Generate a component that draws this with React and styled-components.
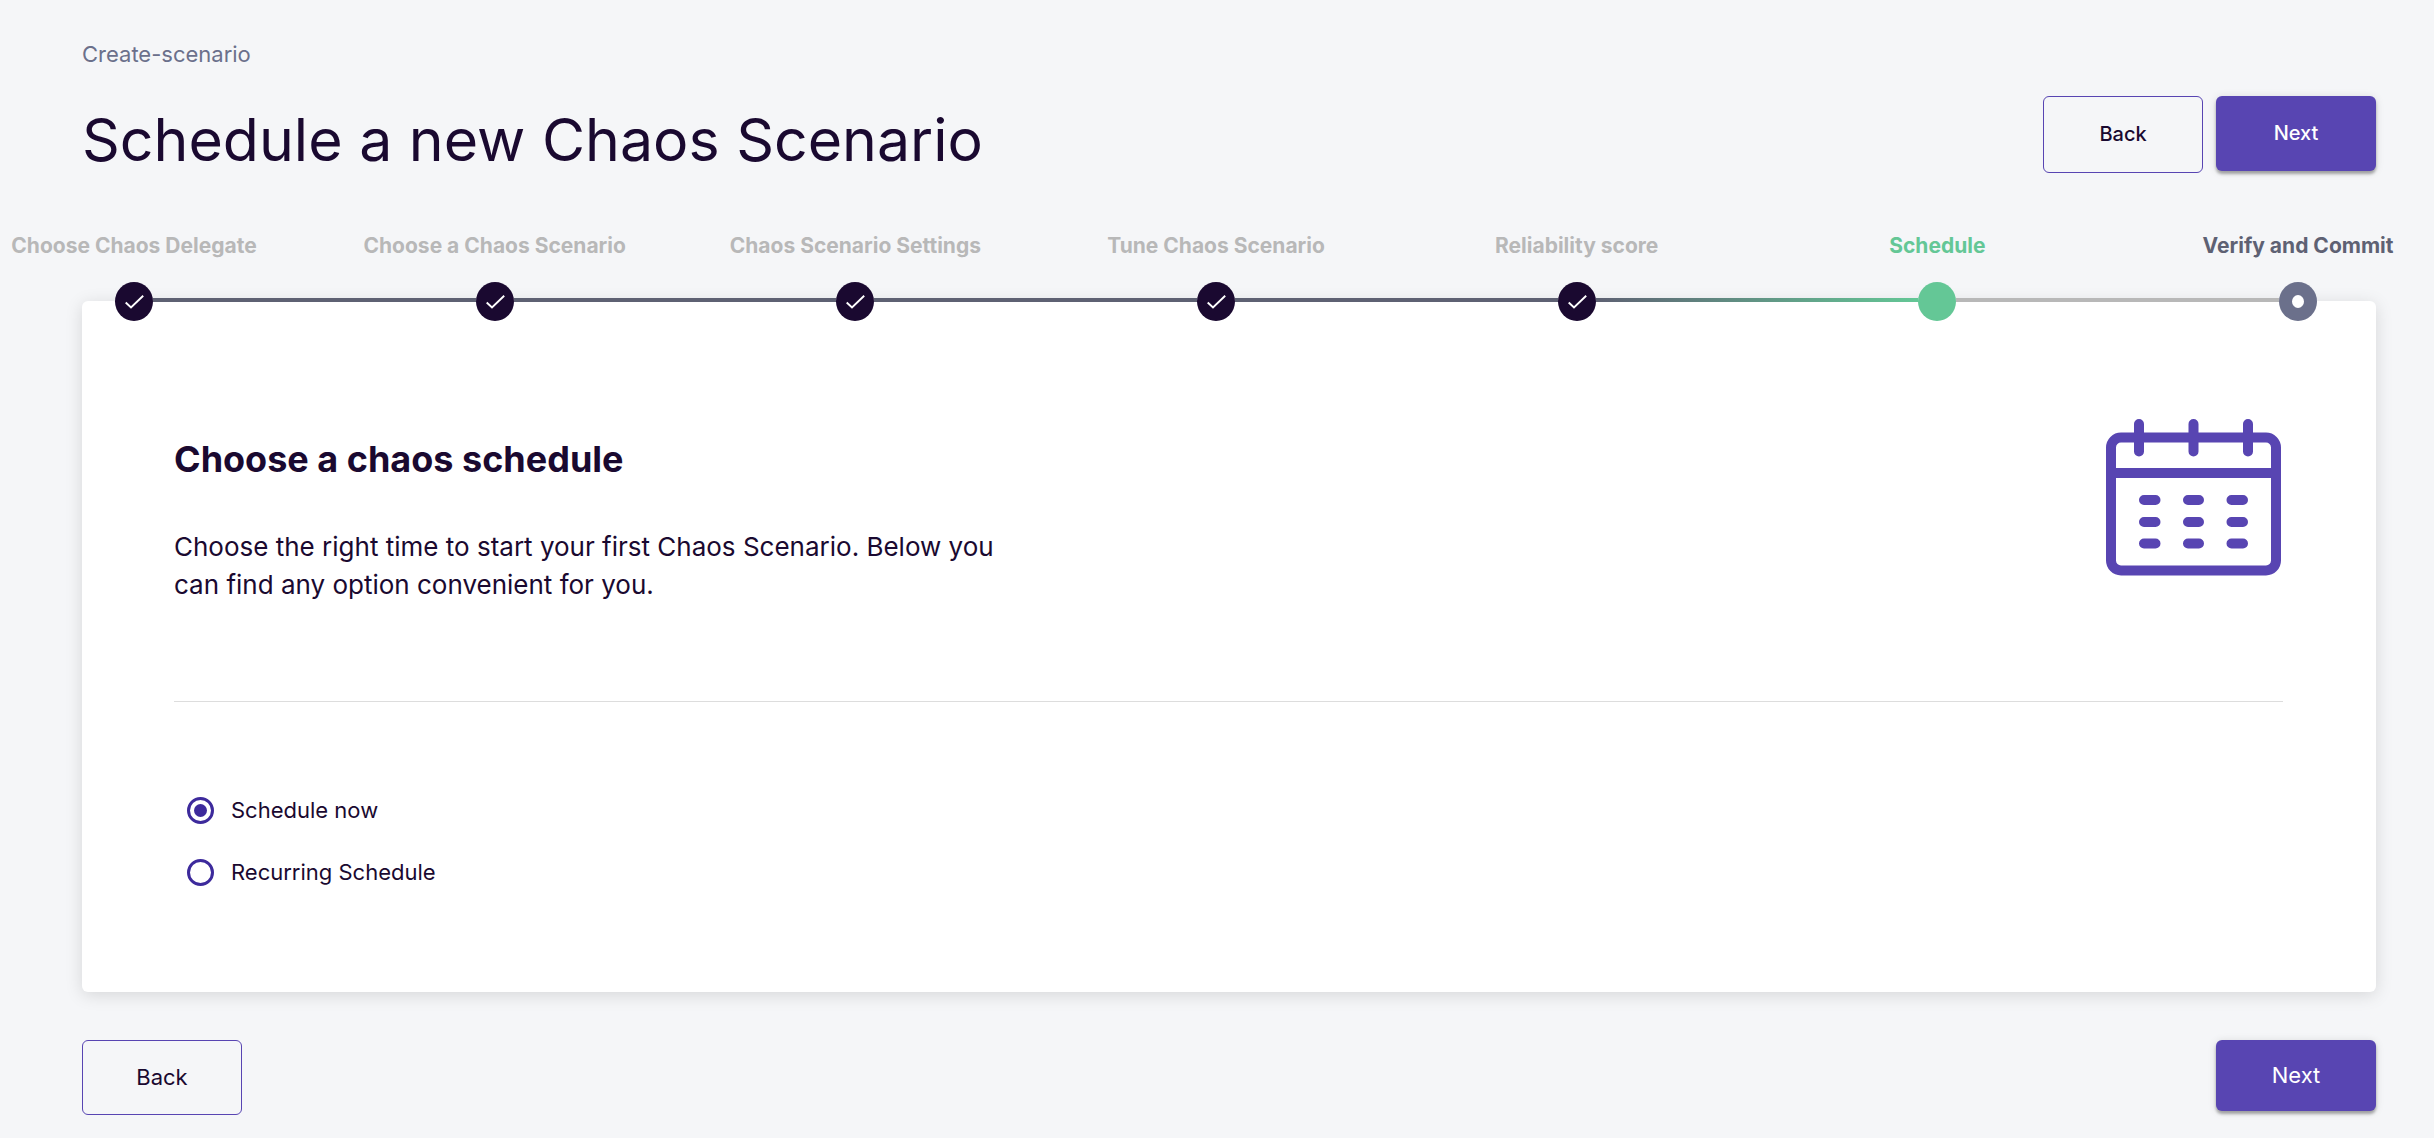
import React, { useState } from 'react';
import styled, { createGlobalStyle, css } from 'styled-components';

const color = {
  page: '#f5f6f8',
  ink: '#1a0930',
  purple: '#5845b2',
  radio: '#3d2a9c',
  slate: '#5e6173',
  muted: '#b8b8b8',
  green: '#64c796',
  ring: '#6b708b',
};

const GlobalStyle = createGlobalStyle`
  *, *::before, *::after { box-sizing: border-box; }
  body {
    margin: 0;
    background: ${color.page};
    color: ${color.ink};
    font-family: Inter, "Liberation Sans", sans-serif;
  }
`;

const Page = styled.main`
  padding: 40px 58px 23px 82px;
`;

const Breadcrumb = styled.a`
  display: block;
  width: fit-content;
  margin-bottom: 28px;
  font-size: 22px;
  line-height: 28px;
  color: ${color.ring};
  text-decoration: none;
`;

const Header = styled.header`
  display: flex;
  justify-content: space-between;
  align-items: flex-start;
`;

const Title = styled.h1`
  margin: 0;
  padding-top: 8px;
  font-size: 59px;
  line-height: 72px;
  font-weight: 400;
`;

const Actions = styled.div`
  display: flex;
  align-items: flex-start;
  gap: 13px;
`;

const Button = styled.button`
  width: 160px;
  padding: ${(p) => (p.$compact ? (p.$filled ? 22 : 23) : 24)}px 16px;
  border: 0;
  border-radius: 6px;
  font-family: inherit;
  font-size: ${(p) => (p.$compact ? 22 : 20)}px;
  font-weight: ${(p) => (p.$compact ? 400 : 500)};
  line-height: 27px;
  cursor: pointer;
  ${(p) =>
    p.$filled
      ? css`
          background: ${color.purple};
          color: #fff;
          box-shadow: 0 3px 3px rgba(0, 0, 0, 0.3), 0 1px 8px rgba(0, 0, 0, 0.12);
        `
      : css`
          border: 1px solid ${color.purple};
          background: transparent;
          color: ${color.ink};
        `}
`;

const Stepper = styled.ol`
  position: relative;
  z-index: 1;
  display: flex;
  margin: 58px 59px -20px 33px;
  padding: 0;
  list-style: none;
`;

const Step = styled.li`
  flex: 1;
  &:last-child { flex: none; }
`;

const StepLabel = styled.div`
  display: flex;
  justify-content: center;
  width: 38px;
  margin-bottom: 24px;
  font-size: 21px;
  line-height: 24px;
  font-weight: 700;
  white-space: nowrap;
  color: ${(p) => ({ done: color.muted, active: color.green, todo: color.slate })[p.$state]};
`;

const Track = styled.div`
  display: flex;
  align-items: flex-start;
`;

const Dot = styled.span`
  display: flex;
  flex: none;
  align-items: center;
  justify-content: center;
  width: 38px;
  height: 39px;
  border-radius: 50%;
  background: ${(p) => ({ done: color.ink, active: color.green, todo: color.ring })[p.$state]};
`;

const Hole = styled.span`
  width: 12px;
  height: 13px;
  border-radius: 50%;
  background: #fff;
`;

const Connector = styled.span`
  flex: 1;
  height: 4px;
  margin-top: 16px;
  background: ${(p) =>
    ({
      done: color.slate,
      active: `linear-gradient(90deg, ${color.slate}, ${color.green})`,
      todo: color.muted,
    })[p.$state]};
`;

const Card = styled.section`
  padding: 118px 93px 89px 92px;
  border-radius: 6px;
  background: #fff;
  box-shadow: 0 3px 17px rgba(0, 0, 0, 0.13);
`;

const Intro = styled.div`
  display: flex;
  justify-content: space-between;
  align-items: flex-start;
  padding-bottom: 97px;
  border-bottom: 1px solid #dddddd;
`;

const IntroText = styled.div`
  max-width: 840px;
  padding-top: 18px;
`;

const Heading = styled.h2`
  margin: 0 0 47px;
  font-size: 36px;
  line-height: 44px;
  font-weight: 700;
`;

const Description = styled.p`
  margin: 0;
  font-size: 26px;
  line-height: 38px;
`;

const CalendarSvg = styled.svg`
  flex: none;
  display: block;
  margin-right: 2px;
`;

const Options = styled.fieldset`
  margin: 0;
  padding: 77px 0 0 13px;
  border: 0;
`;

const Option = styled.label`
  display: flex;
  align-items: center;
  gap: 17px;
  width: fit-content;
  height: 62px;
  font-size: 22px;
  line-height: 28px;
  cursor: pointer;
`;

const Radio = styled.input`
  appearance: none;
  display: grid;
  place-items: center;
  width: 27px;
  height: 27px;
  margin: 0;
  border: 3px solid ${color.radio};
  border-radius: 50%;
  cursor: pointer;
  &:checked::before {
    content: '';
    width: 13px;
    height: 13px;
    border-radius: 50%;
    background: ${color.radio};
  }
`;

const Footer = styled.footer`
  display: flex;
  justify-content: space-between;
  align-items: flex-start;
  margin-top: 48px;
`;

const steps = [
  ['Choose Chaos Delegate', 'done'],
  ['Choose a Chaos Scenario', 'done'],
  ['Chaos Scenario Settings', 'done'],
  ['Tune Chaos Scenario', 'done'],
  ['Reliability score', 'done'],
  ['Schedule', 'active'],
  ['Verify and Commit', 'todo'],
];

const options = [
  ['now', 'Schedule now'],
  ['recurring', 'Recurring Schedule'],
];

function Check() {
  return (
    <svg width="38" height="39" viewBox="0 0 38 39" fill="none" aria-hidden="true">
      <path d="M10.7 20.5L16 25.5L28.2 13.8" stroke="#fff" strokeWidth="1.9" />
    </svg>
  );
}

function Calendar() {
  return (
    <CalendarSvg width="175" height="157" viewBox="0 0 175 157" fill="none" stroke={color.purple} strokeWidth="10" aria-hidden="true">
      <rect x="5" y="18.5" width="165" height="133" rx="10" />
      <path d="M5 54H170" />
      <path d="M33 5V32.5M87.5 5V32.5M142 5V32.5" strokeLinecap="round" />
      <path
        d="M38 81H49.5M82 81H93M125.5 81H137M38 103H49.5M82 103H93M125.5 103H137M38 124.5H49.5M82 124.5H93M125.5 124.5H137"
        strokeLinecap="round"
      />
    </CalendarSvg>
  );
}

export default function App() {
  const [choice, setChoice] = useState('now');

  return (
    <>
      <GlobalStyle />
      <Page>
        <Breadcrumb href="#create-scenario">Create-scenario</Breadcrumb>
        <Header>
          <Title>Schedule a new Chaos Scenario</Title>
          <Actions>
            <Button type="button">Back</Button>
            <Button type="button" $filled>Next</Button>
          </Actions>
        </Header>

        <Stepper>
          {steps.map(([label, state], i) => (
            <Step key={label} aria-current={state === 'active' ? 'step' : undefined}>
              <StepLabel $state={state}>{label}</StepLabel>
              <Track>
                <Dot $state={state}>
                  {state === 'done' && <Check />}
                  {state === 'todo' && <Hole />}
                </Dot>
                {i < steps.length - 1 && <Connector $state={steps[i + 1][1]} />}
              </Track>
            </Step>
          ))}
        </Stepper>

        <Card>
          <Intro>
            <IntroText>
              <Heading>Choose a chaos schedule</Heading>
              <Description>
                Choose the right time to start your first Chaos Scenario. Below you can find any
                option convenient for you.
              </Description>
            </IntroText>
            <Calendar />
          </Intro>
          <Options aria-label="Chaos schedule">
            {options.map(([value, label]) => (
              <Option key={value}>
                <Radio
                  type="radio"
                  name="schedule"
                  value={value}
                  checked={choice === value}
                  onChange={() => setChoice(value)}
                />
                {label}
              </Option>
            ))}
          </Options>
        </Card>

        <Footer>
          <Button type="button" $compact>Back</Button>
          <Button type="button" $compact $filled>Next</Button>
        </Footer>
      </Page>
    </>
  );
}
